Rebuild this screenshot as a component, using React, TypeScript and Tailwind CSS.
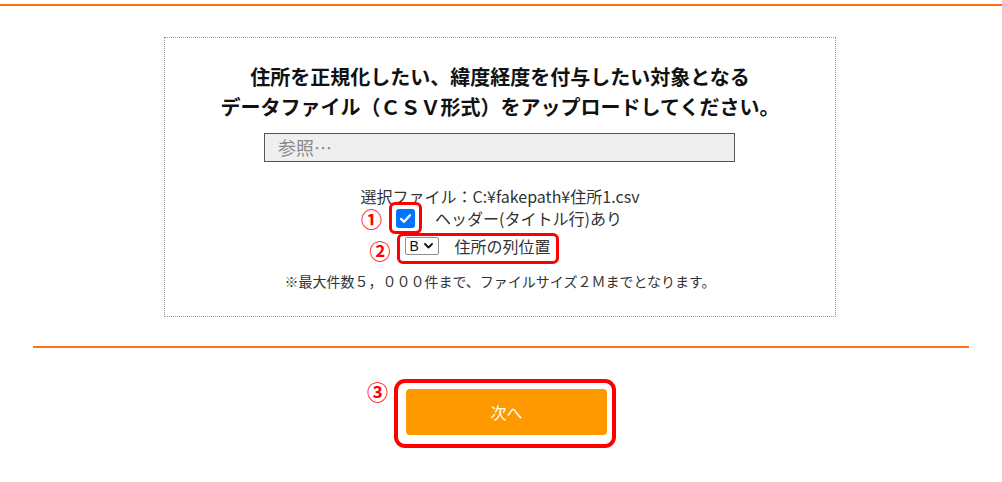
const jp = "font-['Noto_Sans_CJK_JP','Noto_Sans',sans-serif]";

/** White check mark on the blue checkbox. */
function Check() {
  return (
    <svg width="13" height="13" viewBox="0 0 16 16" fill="none" aria-hidden>
      <path d="M2.5 8.5l3.8 3.6L13.5 4" stroke="#fff" strokeWidth="2.8" strokeLinecap="round" strokeLinejoin="round" />
    </svg>
  );
}

function Chevron() {
  return (
    <svg width="9" height="6" viewBox="0 0 9 6" fill="none" aria-hidden>
      <path d="M1 1l3.5 3.5L8 1" stroke="#111" strokeWidth="1.8" strokeLinecap="round" strokeLinejoin="round" />
    </svg>
  );
}

function Mark({ n }: { n: string }) {
  return <span className="block w-[21px] text-center text-[21px] font-bold leading-[16px] text-[#ff0000]">{n}</span>;
}

export default function App() {
  return (
    <div className={`${jp} min-h-[482px] bg-white text-[#222]`}>
      <div className="mt-[4px] h-[2px] w-full bg-[#ff6e0e]" />

      {/* upload panel */}
      <div className="mt-[31px] ml-[164px] w-[672px] border border-dotted border-[#999] pt-[24px] pb-[25px]">
        <h2 className="text-center text-[20px] font-bold leading-[30px] text-[#111]">
          住所を正規化したい、緯度経度を付与したい対象となる
          <br />
          データファイル（ＣＳＶ形式）をアップロードしてください。
        </h2>

        <div className="mt-[11px] ml-[99px] flex h-[29px] w-[471px] items-center border border-[#555] bg-[#efefef] pl-[13px] text-[18px] text-[#8a8a8a]">
          参照…
        </div>

        <p className="mt-[26px] text-center text-[16px] leading-[16px] text-[#333]">
          選択ファイル：C:¥fakepath¥住所1.csv
        </p>

        <div className="-mt-[2px] flex items-center justify-center pr-[17px]">
          <Mark n="①" />
          <div className="ml-[7px] flex h-[32px] w-[33px] items-center justify-center rounded-[6px] border-[3px] border-[#ff0000]">
            <span className="flex h-[19px] w-[19px] items-center justify-center rounded-[3px] bg-[#0075ff]">
              <Check />
            </span>
          </div>
          <span className="ml-[13px] text-[16px] leading-[20px] text-[#333]">ヘッダー(タイトル行)あり</span>
        </div>

        <div className="-mt-[1px] flex items-center justify-center pr-[72px]">
          <span className="mt-[3px]">
            <Mark n="②" />
          </span>
          <div className="ml-[6px] h-[31px] w-[162px] rounded-[6px] border-[3px] border-[#ff0000] pl-[5px]">
            <div className="flex h-[20px] items-center">
              <div className="flex h-[18px] w-[34px] items-center gap-[5px] rounded-[2px] border border-[#8f8f8f] bg-white pl-[4px] font-['Liberation_Sans',sans-serif] text-[14px] text-[#111]">
                B
                <Chevron />
              </div>
              <span className="ml-[16px] text-[16px] leading-[20px] text-[#333]">住所の列位置</span>
            </div>
          </div>
        </div>

        <p className="mt-[7px] text-center text-[14px] leading-[20px] text-[#333]">
          ※最大件数５，０００件まで、ファイルサイズ２Ｍまでとなります。
        </p>
      </div>

      <div className="mx-auto mt-[29px] h-[2px] w-[936px] bg-[#ff7314]" />

      {/* next button */}
      <div className="mt-[31px] flex items-start justify-center pr-[19px]">
        <span className="mt-[4px]">
          <Mark n="③" />
        </span>
        <div className="ml-[6px] h-[69px] w-[222px] rounded-[11px] border-[4px] border-[#ff0000] pl-[8px] pt-[6px]">
          <button className="flex h-[46px] w-[201px] items-center justify-center rounded-[4px] bg-[#ff9900] text-[16px] text-white">
            次へ
          </button>
        </div>
      </div>
    </div>
  );
}
